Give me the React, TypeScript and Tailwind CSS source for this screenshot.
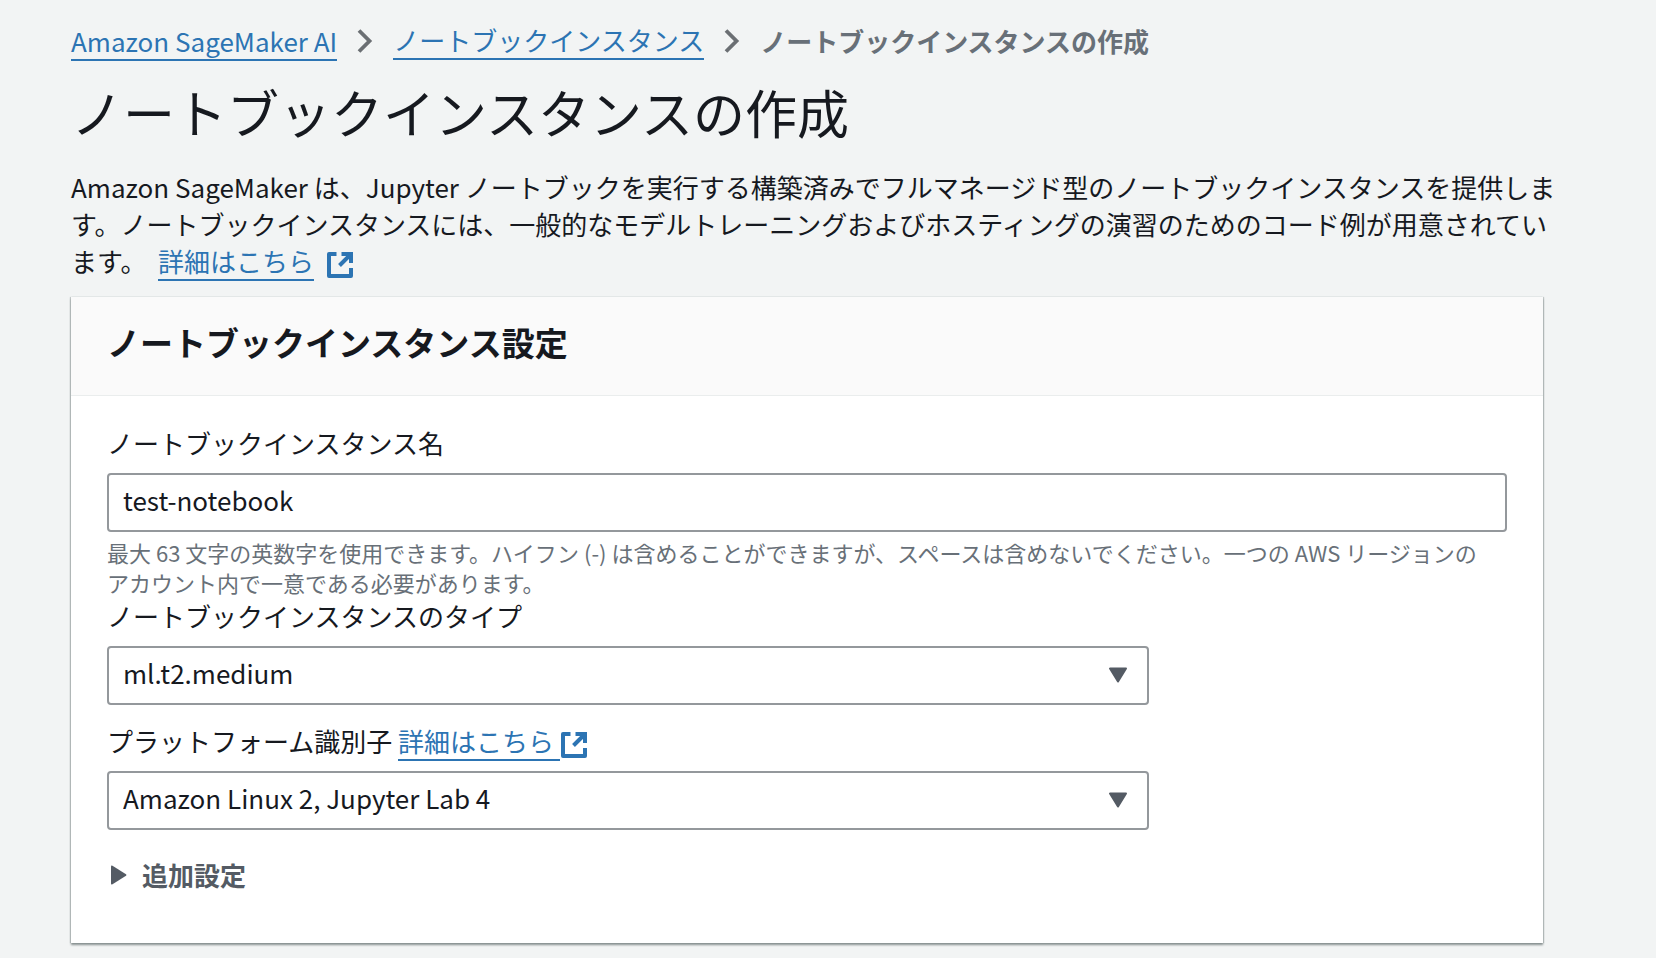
import { useState, type ReactNode } from "react";

const INSTANCE_TYPES = ["ml.t2.medium", "ml.t2.large", "ml.t3.medium", "ml.t3.large"];
const PLATFORMS = ["Amazon Linux 2, Jupyter Lab 4", "Amazon Linux 2, Jupyter Lab 3"];

function ChevronIcon() {
  return (
    <svg viewBox="0 0 16 24" className="h-6 w-4" fill="none" stroke="#6b6f73" strokeWidth="3.8" aria-hidden>
      <path d="M2 1.5 12.5 12 2 22.5" />
    </svg>
  );
}

function ExternalIcon() {
  return (
    <svg
      viewBox="0 0 28 28"
      className="inline-block size-7 align-[-7px]"
      fill="none"
      stroke="#2c74b3"
      strokeWidth="4"
      strokeLinejoin="round"
      aria-hidden
    >
      <path d="M10.5 3H3v22h22v-8" />
      <path d="M15.5 3H25v9M24.5 3.5 13.5 14.5" strokeLinejoin="miter" />
    </svg>
  );
}

function TextLink({ children }: { children: ReactNode }) {
  return (
    <a href="#" className="border-b-2 border-[#2c74b3] text-[#2c74b3]">
      {children}
    </a>
  );
}

function SelectField({
  id,
  options,
  value,
  onChange,
}: {
  id: string;
  options: string[];
  value: string;
  onChange: (value: string) => void;
}) {
  return (
    <div className="w-3/4 pr-2">
      <div className="relative">
        <select
          id={id}
          value={value}
          onChange={(event) => onChange(event.target.value)}
          className="h-[59px] w-full appearance-none rounded-[4px] border-2 border-[#94989c] bg-white px-[14px] pb-[6px] text-[#16191f]"
        >
          {options.map((option) => (
            <option key={option}>{option}</option>
          ))}
        </select>
        <svg
          viewBox="0 0 20 16"
          className="pointer-events-none absolute top-[21px] right-[21px] h-4 w-5"
          fill="#545b64"
          stroke="#545b64"
          strokeWidth="2"
          strokeLinejoin="round"
          aria-hidden
        >
          <path d="M2 1.5h16L10 14.5z" />
        </svg>
      </div>
    </div>
  );
}

export default function App() {
  const [name, setName] = useState("test-notebook");
  const [instanceType, setInstanceType] = useState(INSTANCE_TYPES[0]);
  const [platform, setPlatform] = useState(PLATFORMS[0]);
  const [expanded, setExpanded] = useState(false);

  return (
    <main
      lang="ja"
      className="min-h-screen bg-[#f2f4f4] pt-[21px] pr-[113px] pb-4 pl-[71px] font-['Noto_Sans_CJK_JP',sans-serif] text-[26px] leading-[37px] text-[#16191f]"
    >
      <nav aria-label="breadcrumb">
        <ol className="flex items-center gap-5 whitespace-nowrap">
          <li>
            <TextLink>Amazon SageMaker AI</TextLink>
          </li>
          <li className="flex items-center gap-5">
            <ChevronIcon />
            <TextLink>ノートブックインスタンス</TextLink>
          </li>
          <li className="flex items-center gap-5 font-bold text-[#687078]">
            <ChevronIcon />
            <span aria-current="page">ノートブックインスタンスの作成</span>
          </li>
        </ol>
      </nav>

      <h1 className="mt-4 text-[52px] leading-[72px]">ノートブックインスタンスの作成</h1>

      <p className="mt-5 whitespace-nowrap">
        Amazon SageMaker は、Jupyter ノートブックを実行する構築済みでフルマネージド型のノートブックインスタンスを提供しま
        <br />
        す。ノートブックインスタンスには、一般的なモデルトレーニングおよびホスティングの演習のためのコード例が用意されてい
        <br />
        ます。&nbsp; <TextLink>詳細はこちら</TextLink>&nbsp; <ExternalIcon />
      </p>

      <section className="mt-[18px] bg-white shadow-[0_2px_2px_0_#879090,1px_0_1px_0_#c5caca,-1px_0_1px_0_#c5caca]">
        <header className="border-b border-[#eaeded] bg-[#fafafa] px-9 pt-5 pb-7">
          <h2 className="text-[33px] leading-[50px] font-bold">ノートブックインスタンス設定</h2>
        </header>

        <form className="px-9 pt-7 pb-[50px]" onSubmit={(event) => event.preventDefault()}>
          <label htmlFor="notebook-name" className="block">
            ノートブックインスタンス名
          </label>
          <input
            id="notebook-name"
            type="text"
            value={name}
            onChange={(event) => setName(event.target.value)}
            aria-describedby="notebook-name-hint"
            className="mt-3 block h-[59px] w-full rounded-[4px] border-2 border-[#94989c] bg-white px-[14px] pb-[6px]"
          />
          <p id="notebook-name-hint" className="mt-[5px] text-[22px] leading-[30px] whitespace-nowrap text-[#687078]">
            最大 63 文字の英数字を使用できます。ハイフン (-) は含めることができますが、スペースは含めないでください。一つの AWS リージョンの
            <br />
            アカウント内で一意である必要があります。
          </p>

          <label htmlFor="instance-type" className="mb-3 block">
            ノートブックインスタンスのタイプ
          </label>
          <SelectField id="instance-type" options={INSTANCE_TYPES} value={instanceType} onChange={setInstanceType} />

          <div className="mt-[17px] mb-3">
            <label htmlFor="platform">プラットフォーム識別子</label> <TextLink>詳細はこちら&nbsp;</TextLink>
            <ExternalIcon />
          </div>
          <SelectField id="platform" options={PLATFORMS} value={platform} onChange={setPlatform} />

          <button
            type="button"
            aria-expanded={expanded}
            onClick={() => setExpanded(!expanded)}
            className="mt-[26px] flex items-center gap-[15px] pl-1 font-bold text-[#545b64]"
          >
            <svg viewBox="0 0 16 20" className="h-5 w-4" fill="currentColor" aria-hidden>
              <path d="M0 1.5Q0 0 1.5.8L15 9.2q1 .8 0 1.6L1.5 19.2Q0 20 0 18.5z" />
            </svg>
            追加設定
          </button>
        </form>
      </section>
    </main>
  );
}
